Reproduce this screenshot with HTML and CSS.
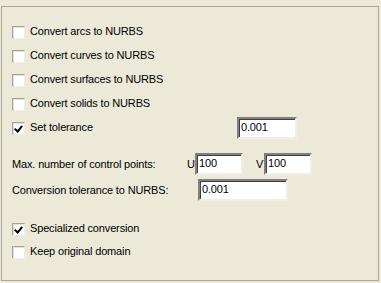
FILE: index.html
```html
<!DOCTYPE html>
<html lang="en">
<head>
    <meta charset="UTF-8">
    <meta name="viewport" content="width=device-width, initial-scale=1.0">
    <title>NURBS Conversion</title>
    <link rel="stylesheet" href="styles.css">
</head>
<body>

<div class="frame">
    <!-- Conversion options -->
    <div class="row check-row">
        <span class="box"></span><span class="label">Convert arcs to NURBS</span>
    </div>
    <div class="row check-row gap">
        <span class="box"></span><span class="label">Convert curves to NURBS</span>
    </div>
    <div class="row check-row gap">
        <span class="box"></span><span class="label">Convert surfaces to NURBS</span>
    </div>
    <div class="row check-row gap">
        <span class="box"></span><span class="label">Convert solids to NURBS</span>
    </div>

    <div class="row field-row tol-row">
        <div class="check-unit">
            <span class="box checked"></span><span class="label">Set tolerance</span>
        </div>
        <div class="field tol-field">0.001</div>
    </div>

    <!-- Control points -->
    <div class="row field-row ctrl-row">
        <span class="text">Max. number of control points:</span>
        <span class="axis axis-u">U</span>
        <div class="field num-field">100</div>
        <span class="axis axis-v">V</span>
        <div class="field num-field">100</div>
    </div>
    <div class="row field-row conv-row">
        <span class="text">Conversion tolerance to NURBS:</span>
        <div class="field conv-field">0.001</div>
    </div>

    <div class="row check-row spec-row">
        <span class="box checked"></span><span class="label">Specialized conversion</span>
    </div>
    <div class="row check-row keep-row">
        <span class="box"></span><span class="label">Keep original domain</span>
    </div>
</div>

</body>
</html>
```

FILE: styles.css
```css
body {
    margin: 0;
    background-color: #ece9d8;
    font-family: "Liberation Sans", Arial, sans-serif;
    font-size: 11px;
    letter-spacing: -0.15px;
    color: #000;
}

.frame {
    margin: 6px 0 0 1px;
    width: 378px;
    height: 275px;
    border: 1px solid #aca899;
    padding: 19px 0 0 10px;
    box-sizing: border-box;
}

.row {
    display: flex;
    align-items: center;
}

.check-row {
    height: 13px;
}

.gap {
    margin-top: 11px;
}

.box {
    width: 13px;
    height: 13px;
    box-sizing: border-box;
    border-top: 1px solid #a5a297;
    border-left: 1px solid #a5a297;
    border-right: 1px solid #f1efe2;
    border-bottom: 1px solid #f1efe2;
    background-color: #fff;
    box-shadow: inset 1px 1px 0 #e4e2d6;
    position: relative;
    flex: none;
}

.box.checked::after {
    content: "";
    position: absolute;
    left: 3px;
    top: 1px;
    width: 3px;
    height: 6px;
    border-right: 2px solid #000;
    border-bottom: 2px solid #000;
    transform: rotate(40deg);
}

.label {
    margin-left: 5px;
    line-height: 13px;
    margin-top: -2px;
}

.field-row {
    height: 22px;
}

.tol-row {
    margin-top: 6px;
    align-items: flex-start;
}

.check-unit {
    display: flex;
    align-items: center;
    height: 13px;
    margin-top: 5px;
    width: 225px;
}

.field {
    height: 22px;
    box-sizing: border-box;
    border-top: 2px solid #808080;
    border-left: 2px solid #808080;
    border-right: 2px solid #f1efe2;
    border-bottom: 2px solid #f1efe2;
    box-shadow: inset 1px 1px 0 #404040;
    background-color: #fff;
    padding: 2px 0 0 2px;
    line-height: 13px;
}

.tol-field {
    width: 60px;
}

.ctrl-row {
    margin-top: 14px;
}

.text {
    width: 175px;
}

.axis {
    width: 8px;
}

.axis-v {
    margin-left: 13px;
}

.num-field {
    width: 48px;
}

.conv-row {
    margin-top: 4px;
}

.conv-field {
    width: 90px;
    margin-left: 11px;
}

.spec-row {
    margin-top: 22px;
}

.keep-row {
    margin-top: 10px;
}
```
